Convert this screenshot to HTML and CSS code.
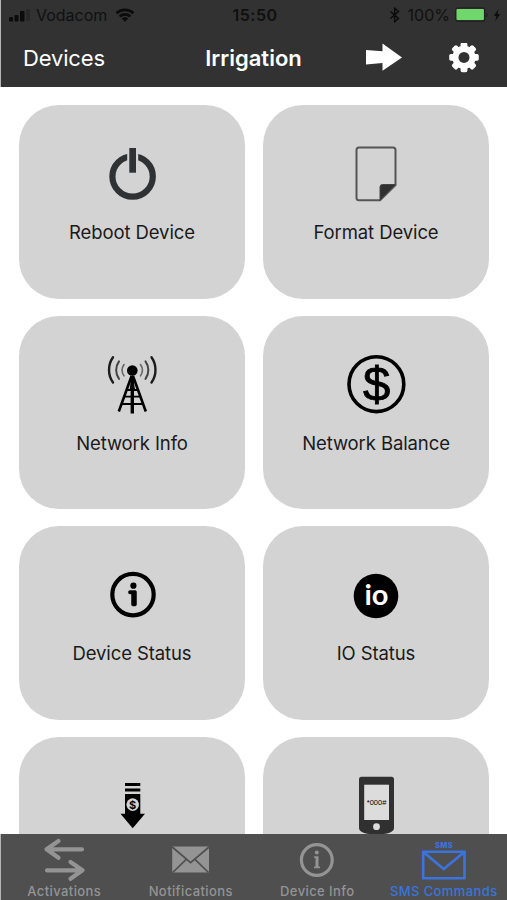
FILE: index.html
```html
<!DOCTYPE html>
<html lang="en">
<head>
  <meta charset="UTF-8">
  <meta name="viewport" content="width=device-width, initial-scale=1.0">
  <title>Irrigation</title>
  <link rel="stylesheet" href="styles.css">
</head>
<body>

<div class="app">
  <header class="header">
    <div class="status-bar">
      <div class="status-left">
        <svg width="23" height="16" viewBox="0 0 23 16">
          <rect x="0" y="10" width="4" height="4.500" rx="1"/>
          <rect x="5.5" y="8" width="4" height="6.500" rx="1"/>
          <rect x="11" y="4" width="4.500" height="10.500" rx="1"/>
          <rect x="17" y="2" width="4" height="12" rx="1" opacity="0.25"/>
        </svg>
        <span class="carrier">Vodacom</span>
        <svg width="20" height="16" viewBox="0 0 20 16">
          <path d="M1.5 6.2a12.5 12.5 0 0 1 17 0M4.7 9.4a8 8 0 0 1 10.6 0" fill="none" stroke="#0b0b0b" stroke-width="2.7"/>
          <path d="M10 14.8l-3.2-3.3a4.6 4.6 0 0 1 6.4 0z"/>
        </svg>
      </div>
      <span class="time">15:50</span>
      <div class="status-right">
        <svg width="12" height="16" viewBox="0 0 12 16">
          <path d="M1.5 4.5l8 7L5.7 14.7V1.3l3.8 3.2-8 7" fill="none" stroke="#0b0b0b" stroke-width="1.5"/>
        </svg>
        <span class="percent">100%</span>
        <svg width="34" height="16" viewBox="0 0 34 16">
          <rect x="0.7" y="0.8" width="29" height="13.6" rx="2.5" fill="none" stroke="#222" stroke-width="1.3"/>
          <rect x="1.500" y="2" width="27.4" height="11" rx="1" fill="#6fd76c"/>
          <rect x="31" y="6" width="1.6" height="4" rx="0.8" fill="#222"/>
        </svg>
        <svg class="bolt" width="8" height="14" viewBox="0 0 8 14">
          <path d="M5.6 1L0.8 7.8h2.8L2.2 13l5-7H4.4z"/>
        </svg>
      </div>
    </div>
    <nav class="nav">
      <a class="nav-back">Devices</a>
      <h1 class="nav-title">Irrigation</h1>
      <div class="nav-actions">
        <svg width="37" height="30" viewBox="0 0 37 30" fill="#fff">
          <path d="M0 7l16.500 1.300V0.500L36 14.600 16.500 27.800V20L0 21.500z"/>
        </svg>
        <svg width="30" height="30" viewBox="0 0 30 30">
          <g fill="#fff">
            <circle cx="15" cy="14.400" r="11.6"/>
            <rect x="11.6" y="-0.400" width="6.8" height="29.6" rx="1.8"/>
            <rect x="11.6" y="-0.400" width="6.8" height="29.6" rx="1.8" transform="rotate(45 15 14.400)"/>
            <rect x="11.6" y="-0.400" width="6.8" height="29.6" rx="1.8" transform="rotate(90 15 14.400)"/>
            <rect x="11.6" y="-0.400" width="6.8" height="29.6" rx="1.8" transform="rotate(135 15 14.400)"/>
          </g>
          <circle cx="15" cy="14.400" r="5.5" fill="#323232"/>
        </svg>
      </div>
    </nav>
  </header>

  <main class="grid">
    <div class="card">
      <svg class="card-icon" viewBox="0 0 64 64">
        <circle cx="32.6" cy="33.500" r="20.2" fill="none" stroke="#303133" stroke-width="6.2"/>
        <rect x="27.2" y="8" width="11" height="18" fill="#d3d3d3"/>
        <rect x="29.3" y="5" width="6.7" height="24.7" fill="#303133"/>
      </svg>
      <span>Reboot Device</span>
    </div>
    <div class="card">
      <svg class="card-icon" viewBox="0 0 64 64">
        <path d="M15 4.4h34a2.5 2.5 0 0 1 2.5 2.5V42L36 57.3H15a2.5 2.5 0 0 1-2.5-2.5V6.9A2.5 2.5 0 0 1 15 4.4z" fill="none" stroke="#555" stroke-width="2"/>
        <path d="M36 57.3V44a2.5 2.5 0 0 1 2.5-2.5h13z" fill="#303030" stroke="#444"/>
      </svg>
      <span>Format Device</span>
    </div>
    <div class="card">
      <svg class="card-icon" viewBox="0 0 64 64">
        <circle cx="32.3" cy="16.5" r="5.3"/>
        <g fill="none" stroke="#1c1c1c" stroke-linecap="round">
          <path d="M13 3.3a22 22 0 0 0 0 25.2M51.5 3.3a22 22 0 0 1 0 25.2" stroke-width="2.4"/>
          <path d="M19 7.3a15 15 0 0 0 0 17.6M45.5 7.3a15 15 0 0 1 0 17.6" stroke="#444" stroke-width="2"/>
          <path d="M24 10.5a10 10 0 0 0 0 11.4M40.5 10.5a10 10 0 0 1 0 11.4" stroke="#666" stroke-width="1.6"/>
        </g>
        <path d="M32.3 20l2.8 16h-5.6z"/>
        <path d="M31.6 22L18.8 57.5M33 22l12.8 35.5" fill="none" stroke="#000" stroke-width="2.6"/>
        <path d="M32.3 22v37.5" stroke="#000" stroke-width="3.4"/>
        <path d="M21.5 50h21.6M24 42.7h16.6M26.5 36h11.6" stroke="#000" stroke-width="1.8"/>
      </svg>
      <span>Network Info</span>
    </div>
    <div class="card">
      <svg class="card-icon" viewBox="0 0 64 64">
        <circle cx="32.4" cy="30.2" r="27.4" fill="none" stroke="#000" stroke-width="3.6"/>
        <text class="dollar" x="32.6" y="47">$</text>
      </svg>
      <span>Network Balance</span>
    </div>
    <div class="card">
      <svg class="card-icon" viewBox="0 0 64 64">
        <circle cx="33" cy="30.6" r="20.7" fill="none" stroke="#000" stroke-width="4.2"/>
        <circle cx="33.4" cy="21.7" r="3.1"/>
        <path d="M30 26.6h5.1a1.4 1.4 0 0 1 1.4 1.4v12.4a1.6 1.6 0 0 1-1.6 1.6h-1.8a1.6 1.6 0 0 1-1.6-1.6V29.9H30a1.65 1.65 0 0 1 0-3.3z" stroke="#000" stroke-width="0.500"/>
      </svg>
      <span>Device Status</span>
    </div>
    <div class="card">
      <svg class="card-icon" viewBox="0 0 64 64">
        <circle cx="32" cy="32" r="22.3"/>
        <text class="io" x="32.4" y="40.5">io</text>
      </svg>
      <span>IO Status</span>
    </div>
    <div class="card">
      <svg class="card-icon" viewBox="0 0 64 64">
        <path d="M25 7.9h15.3v3H25zM25 13.6h15.3v3H25zM25 19.1h15.3v19.7H45L32.7 53.3 20.5 38.8H25z"/>
        <circle cx="32.7" cy="29.6" r="6.3" fill="#d3d3d3"/>
        <text class="coin" x="32.7" y="33.5">$</text>
      </svg>
    </div>
    <div class="card">
      <svg class="card-icon" viewBox="0 0 64 64">
        <path d="M17.5 1.7h30a2.5 2.5 0 0 1 2.5 2.5V53q0 3.500-6 5.200-11.500 2.500-23 0-6-1.700-6-5.200V4.200a2.500 2.500 0 0 1 2.500-2.500z" fill="#303030"/>
        <rect x="20.200" y="9.700" width="24.800" height="35.300" fill="#dcdcdc"/>
        <circle cx="32.500" cy="51.700" r="3.400" fill="#dcdcdc"/>
        <text class="ussd" x="32.600" y="29.500">*000#</text>
      </svg>
    </div>
  </main>

  <footer class="tabs">
    <a class="tab">
      <svg class="tab-icon" viewBox="0 0 50 48" fill="none" stroke="#949494" stroke-width="4.200" stroke-linecap="round" stroke-linejoin="round">
        <path d="M43 15.300H8M19.500 7L7.500 15.300l12 8.500M8 36.300h35M31.500 28l12 8.300-12 8.500"/>
      </svg>
      <span>Activations</span>
    </a>
    <a class="tab">
      <svg class="tab-icon" viewBox="0 0 50 48">
        <rect x="6.200" y="12.500" width="36.800" height="26" fill="#949494"/>
        <path d="M6.200 13L24.600 28.700 43 13M20.500 25.200L6.700 38.500M28.700 25.200l13.800 13.300" fill="none" stroke="#4f4f4f" stroke-width="1.700"/>
      </svg>
      <span>Notifications</span>
    </a>
    <a class="tab">
      <svg class="tab-icon" viewBox="0 0 50 48">
        <circle cx="24.800" cy="26" r="15.400" fill="none" stroke="#949494" stroke-width="3.200"/>
        <circle cx="24.800" cy="18.500" r="2" fill="#949494"/>
        <path d="M22.200 22.200h4.300v10.300H28v1.800h-6v-1.800h1.500v-8.500h-1.300z" fill="#949494"/>
      </svg>
      <span>Device Info</span>
    </a>
    <a class="tab active">
      <svg class="tab-icon" viewBox="0 0 50 48">
        <text class="sms" x="25" y="13.500">SMS</text>
        <path d="M4.200 17.700h41.300v26.500H4.200zM5 18.500l19.700 16.500 20-16.500" fill="none" stroke="#3b74de" stroke-width="2.600"/>
      </svg>
      <span>SMS Commands</span>
    </a>
  </footer>
</div>

</body>
</html>
```
FILE: styles.css
```css
* {
  box-sizing: border-box;
}

body {
  margin: 0;
  font-family: Inter, "Liberation Sans", sans-serif;
  background: #fff;
  color: #1a1a1a;
}

svg {
  display: block;
  flex-shrink: 0;
}

.app {
  display: flex;
  flex-direction: column;
  height: 900px;
  overflow: hidden;
}

.header {
  flex-shrink: 0;
  height: 87px;
  background: #323232;
  border-left: 1px solid #b5b5b5;
}

.status-bar {
  display: grid;
  grid-template-columns: 1fr auto 1fr;
  align-items: center;
  height: 30px;
  padding: 0 6px 0 8px;
  font-size: 16px;
  color: #101010;
}

.status-bar svg {
  fill: #0b0b0b;
}

.status-left, .status-right {
  display: flex;
  align-items: center;
}

.status-right {
  justify-content: flex-end;
}

.carrier {
  margin: 0 8px 0 4px;
}

.time {
  font-weight: 600;
  letter-spacing: 0.5px;
}

.percent {
  margin: 0 5px 0 7px;
}

.bolt {
  margin-left: 4px;
}

.nav {
  display: grid;
  grid-template-columns: 1fr auto 1fr;
  align-items: center;
  height: 55px;
  padding: 0 28px 0 22px;
  color: #fff;
  font-size: 22px;
}

.nav-back {
  letter-spacing: -0.15px;
}

.nav-title {
  margin: 0 0 0 5px;
  font-size: 22px;
  font-weight: 600;
}

.nav-actions {
  display: flex;
  justify-content: flex-end;
  gap: 46px;
}

.grid {
  flex: 1;
  min-height: 0;
  overflow: hidden;
  display: grid;
  grid-template-columns: 226px 226px;
  grid-auto-rows: 193.5px;
  gap: 17px 18px;
  padding: 18px 18px 0 19px;
}

.card {
  display: flex;
  flex-direction: column;
  align-items: center;
  padding-top: 38px;
  border-radius: 40px;
  background: #d3d3d3;
  font-size: 18.5px;
  line-height: 24px;
  letter-spacing: -0.1px;
}

.card-icon {
  width: 64px;
  height: 64px;
  margin-bottom: 13px;
}

.card-icon text {
  text-anchor: middle;
  letter-spacing: 0;
}

.dollar {
  font-family: "Liberation Sans", sans-serif;
  font-size: 49px;
  stroke: #000;
  stroke-width: 0.9px;
}

.io {
  font-family: Lato, sans-serif;
  font-size: 29px;
  font-weight: 700;
  fill: #fff;
}

.coin {
  font-size: 11px;
  font-weight: 700;
}

.ussd {
  font-family: "Liberation Sans", sans-serif;
  font-size: 7.5px;
}

.tabs {
  flex-shrink: 0;
  display: grid;
  grid-template-columns: repeat(4, 1fr);
  height: 66px;
  background: #4f4f4f;
  border-left: 1px solid #b5b5b5;
  color: #949494;
}

.tab {
  display: flex;
  flex-direction: column;
  align-items: center;
  font-size: 13px;
  font-weight: 500;
  line-height: 18px;
  letter-spacing: 0.4px;
  white-space: nowrap;
}

.tab.active {
  color: #3b74de;
}

.tab-icon {
  width: 50px;
  height: 48px;
}

.sms {
  font-size: 7.5px;
  font-weight: 800;
  text-anchor: middle;
  fill: #3b74de;
}
```
